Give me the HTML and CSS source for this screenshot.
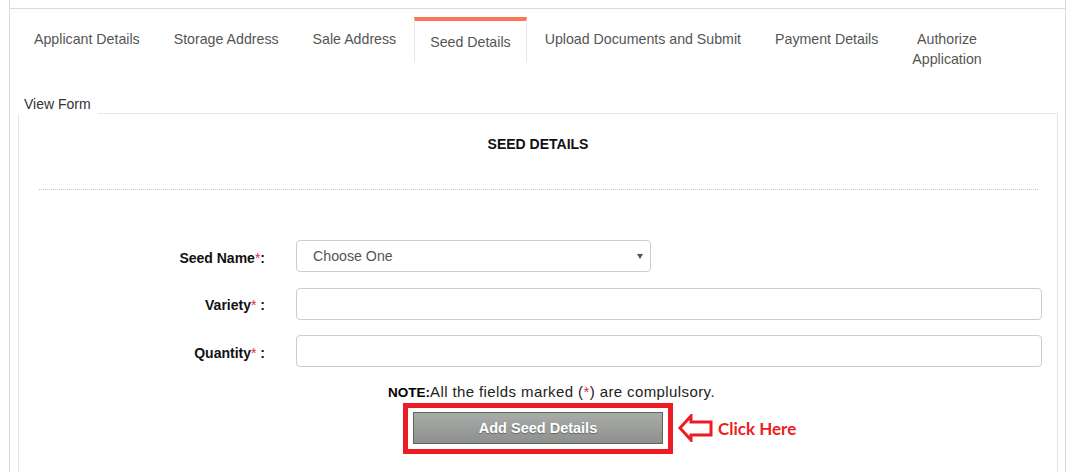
FILE: index.html
```html
<!DOCTYPE html>
<html>
<head>
  <title>Seed Details</title>
  <link rel="stylesheet" href="styles.css">
</head>
<body>
  <div class="wrapper">
    <div class="topbar"></div>

    <ul class="tabs">
      <li><a href="#">Applicant Details</a></li>
      <li><a href="#">Storage Address</a></li>
      <li><a href="#">Sale Address</a></li>
      <li class="active"><a href="#">Seed Details</a></li>
      <li><a href="#">Upload Documents and Submit</a></li>
      <li><a href="#">Payment Details</a></li>
      <li class="two-line"><a href="#">Authorize<br>Application</a></li>
    </ul>

    <div class="view-label">View Form</div>
    <div class="panel">
      <h4 class="panel-title">SEED DETAILS</h4>
      <hr class="dotted">

      <form class="seed-form">
        <div class="form-row">
          <label>Seed Name<span class="req">*</span>:</label>
          <div class="select-wrap">
            <select>
              <option>Choose One</option>
            </select>
          </div>
        </div>
        <div class="form-row">
          <label>Variety<span class="req">*</span> :</label>
          <input type="text">
        </div>
        <div class="form-row">
          <label>Quantity<span class="req">*</span> :</label>
          <input type="text">
        </div>

        <p class="note"><b>NOTE:</b>All the fields marked (<span class="req">*</span>) are complulsory.</p>

        <div class="actions">
          <div class="highlight">
            <button type="button">Add Seed Details</button>
          </div>
          <svg class="arrow" width="36" height="28" viewBox="0 0 36 28">
            <path d="M3 14 L14 2 V8 H34 V21 H14 V26 Z" fill="#fff" stroke="#ed1c24" stroke-width="3" stroke-linejoin="miter"/>
          </svg>
          <span class="click-here">Click Here</span>
        </div>
      </form>
    </div>
  </div>
</body>
</html>
```

FILE: styles.css
```css
body {
  margin: 0;
  padding: 0;
  font-family: "Liberation Sans", Arial, sans-serif;
  background: #fff;
  color: #333;
}
.wrapper {
  margin-left: 9px;
  width: 1055px;
  min-height: 472px;
  border-left: 1px solid #dcdcdc;
  border-right: 1px solid #dcdcdc;
}
.topbar {
  height: 8px;
  border-bottom: 1px solid #dcdcdc;
}

/* tabs */
.tabs {
  list-style: none;
  margin: 8px 0 0 0;
  padding: 0 0 0 8px;
  height: 77px;
  display: flex;
  align-items: flex-start;
}
.tabs li {
  margin-right: 2px;
}
.tabs a {
  display: block;
  padding: 11px 15px 10px;
  border: 1px solid transparent;
  font-size: 14.2px;
  line-height: 20px;
  color: #555;
  text-decoration: none;
}
.tabs .active a {
  border-color: #e6e6e6;
  border-top: 4px solid #fd7456;
  border-bottom-color: transparent;
}
.tabs .two-line a {
  text-align: center;
}

/* form panel */
.view-label {
  position: relative;
  display: inline-block;
  margin-left: 8px;
  margin-bottom: -1px;
  padding: 0 7px 0 6px;
  background: #fff;
  font-size: 14px;
  line-height: 20px;
  color: #333;
  z-index: 1;
}
.panel {
  margin: 0 7px 0 8px;
  border: 1px solid #e3e3e8;
  border-bottom: none;
  padding: 20px 0 30px;
}
.panel-title {
  margin: 0;
  text-align: center;
  font-size: 14px;
  line-height: 20px;
  font-weight: bold;
  color: #111;
}
.dotted {
  margin: 35px 19px 0 20px;
  border: none;
  border-top: 1px dotted #c4c4c4;
  height: 0;
}
.seed-form {
  margin-top: 50px;
}
.form-row {
  display: grid;
  grid-template-columns: 246px 1fr;
  column-gap: 31px;
  align-items: center;
  padding-right: 15px;
  margin-bottom: 15.5px;
}
.form-row label {
  text-align: right;
  font-size: 14px;
  font-weight: bold;
  color: #111;
  padding-top: 3px;
}
.req {
  color: #f0263c;
  font-weight: normal;
}
.form-row input,
.form-row select {
  box-sizing: border-box;
  height: 32px;
  border: 1px solid #cdcdcd;
  border-radius: 4px;
  background: #fff;
  font-family: "Liberation Sans", Arial, sans-serif;
  font-size: 14.2px;
  color: #555;
}
.form-row input {
  width: 100%;
}
.select-wrap {
  position: relative;
  width: 355px;
}
.select-wrap select {
  width: 100%;
  padding: 0 16px;
  -webkit-appearance: none;
  appearance: none;
}
.select-wrap::after {
  content: "";
  position: absolute;
  right: 8px;
  top: 14px;
  border-left: 3px solid transparent;
  border-right: 3px solid transparent;
  border-top: 5px solid #555;
}
.note {
  margin: 1.5px 0 1px;
  padding-left: 369px;
  font-size: 15px;
  letter-spacing: 0.4px;
  line-height: 18px;
  color: #222;
}
.note b {
  font-size: 13.5px;
  letter-spacing: 0;
  color: #000;
}
.actions {
  display: flex;
  align-items: center;
  padding-left: 384px;
}
.highlight {
  border: 5px solid #ed1c24;
  padding: 4px 5px 5px;
}
.highlight button {
  display: block;
  width: 250px;
  height: 32px;
  border: 1px solid #5f635f;
  background: linear-gradient(#a9aca9, #8d908d);
  color: #fff;
  font-family: "Liberation Sans", Arial, sans-serif;
  font-size: 14.5px;
  font-weight: bold;
  text-shadow: 0 1px 1px rgba(0, 0, 0, 0.35);
  cursor: pointer;
}
.arrow {
  margin-left: 4px;
}
.click-here {
  margin-left: 5px;
  font-family: Lato, "Open Sans", sans-serif;
  font-weight: bold;
  font-size: 17px;
  color: #ed1c24;
}
```
